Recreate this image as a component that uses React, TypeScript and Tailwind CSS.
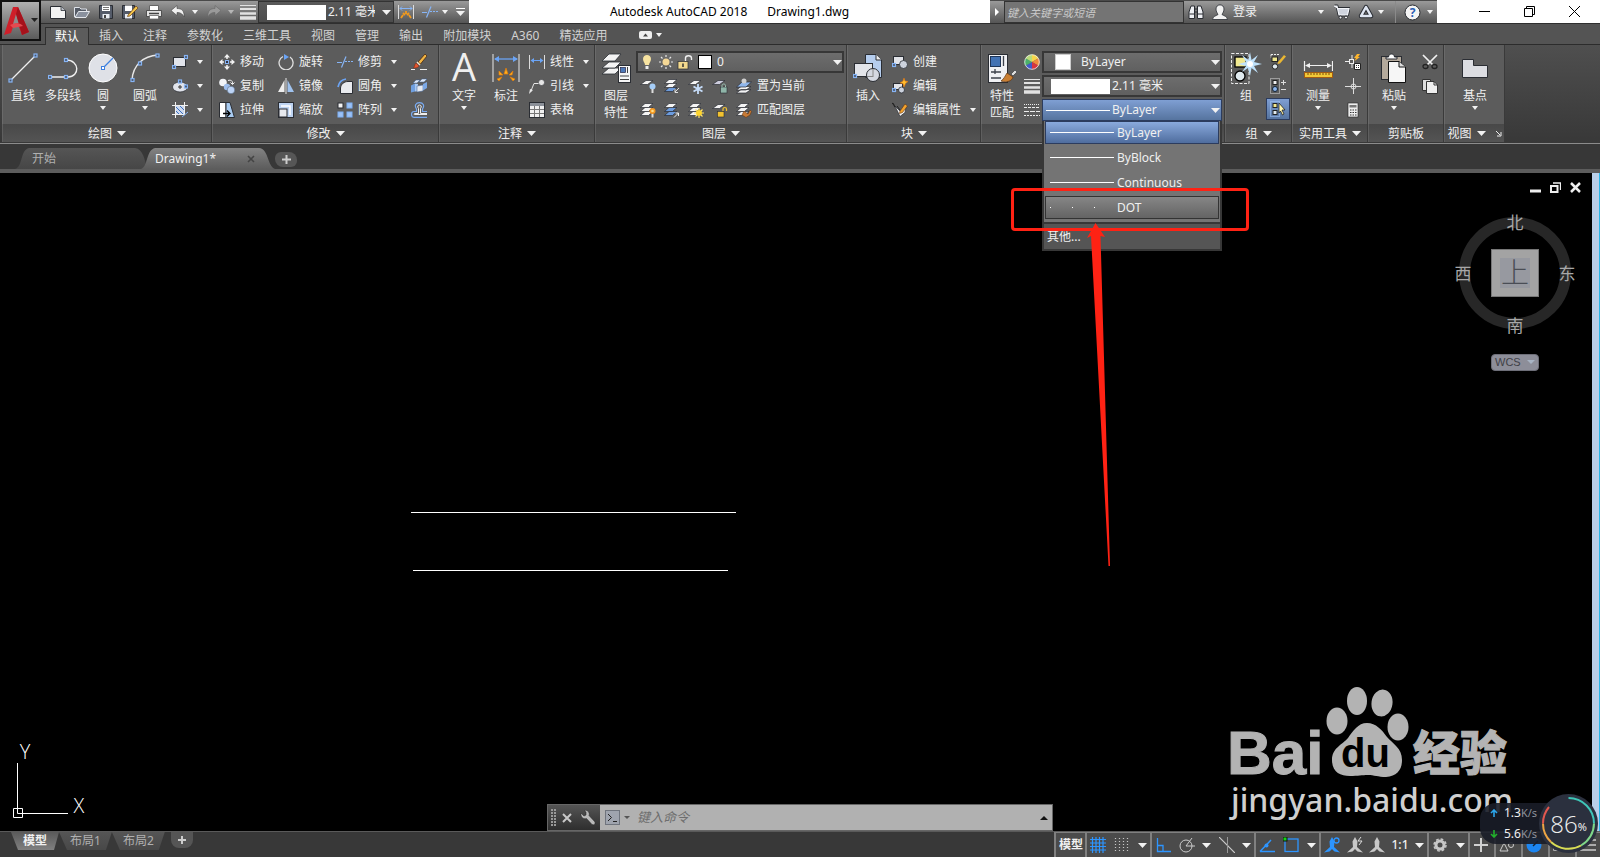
import React from 'react';

interface IconProps {
  children: React.ReactNode;
  size?: number;
}

const Icon: React.FC<IconProps> = ({ children, size = 16 }) => (
  <svg width={size} height={size} viewBox={`0 0 ${size} ${size}`} fill="none" className="shrink-0" aria-hidden="true">
    {children}
  </svg>
);

const BLUE = '#86b4f5';
const PALE = '#e4e7ec';
const DARK = '#2a2d33';

const Node: React.FC<{ x: number; y: number }> = ({ x, y }) => (
  <rect x={x - 1.5} y={y - 1.5} width="3" height="3" fill="#4a5568" stroke={BLUE} strokeWidth="1.2" />
);

const Caret: React.FC<{ big?: boolean }> = ({ big }) => (
  <svg width={big ? 9 : 6} height={big ? 5 : 4} viewBox="0 0 8 4" preserveAspectRatio="none" className="pointer-events-none shrink-0" aria-hidden="true">
    <path d="M0 0H8L4 4Z" fill="#f2f2f2" />
  </svg>
);

/* stack of sheets used by every layer icon */
const Sheets: React.FC<{ top?: string; low?: string }> = ({ top = '#f4f4f4', low = '#f4f4f4' }) => (
  <g stroke={DARK} strokeWidth="0.7">
    <path d="M0.5 13.5L5 9.500H13L8.500 13.500Z" fill={low} />
    <path d="M0.5 9.500L5 5.500H13L8.500 9.500Z" fill={top} />
    <path d="M0.5 5.500L5 1.500H13L8.500 5.500Z" fill="#f4f4f4" />
  </g>
);

const OneSheet: React.FC<{ fill?: string }> = ({ fill = '#f4f4f4' }) => (
  <path d="M0.5 6.500L6 2.500H13L7.500 6.500Z" fill={fill} stroke={DARK} strokeWidth="0.7" />
);

const icons = {
  newFile: (
    <Icon>
      <path d="M.5 2.500H11L15.500 6.500V14.500H.500Z" fill="#f3f3f3" stroke={DARK} />
      <path d="M11 2.500V6.500H15.500" fill="#b9bdc4" stroke={DARK} strokeWidth=".8" />
    </Icon>
  ),
  open: (
    <Icon>
      <path d="M.5 13V3.500H5.500L7 5H12.500V8" fill="#555b66" stroke="#dfe3ea" />
      <path d="M1 13.500L4.500 7.500H15.500L12 13.500Z" fill="#8a919e" stroke={PALE} />
    </Icon>
  ),
  save: (
    <Icon>
      <path d="M1.500 1.500H14.500V14.500H1.500Z" fill="#545b69" stroke={DARK} />
      <path d="M4 1.500H12V7H4Z" fill="#fff" />
      <path d="M5 3.500H11M5 5.500H11" stroke="#777" />
      <path d="M4.500 10H11.500V14.500H4.500Z" fill="#e9edf3" />
      <path d="M6 11H8V14H6Z" fill="#444" />
    </Icon>
  ),
  saveAs: (
    <Icon>
      <path d="M.5 1.500H12.500V14.500H.500Z" fill="#545b69" stroke={DARK} />
      <path d="M3 1.500H10V7H3Z" fill="#fff" />
      <path d="M3 10H10V14.500H3Z" fill="#e9edf3" />
      <path d="M6 11L14 2L16 4L8 12L5.500 12.500Z" fill="#f3c54c" stroke="#6b3f15" strokeWidth=".7" />
    </Icon>
  ),
  print: (
    <Icon>
      <path d="M3.500 6V1.500H12.500V6" fill="#fff" stroke="#666" />
      <path d="M.5 6.500H15.500V12.500H.500Z" fill="#e4e4e4" stroke="#3a3a3a" strokeWidth=".8" />
      <path d="M3 9.500H13" stroke="#444" strokeWidth="1.500" />
      <path d="M3.500 11.500H12.500V15H3.500Z" fill="#fff" stroke="#666" strokeWidth=".8" />
    </Icon>
  ),
  undo: (
    <Icon>
      <path d="M1 6.500L7 1.500V4.500C12 4.500 14.500 7 14 13C12.500 10 11 8.500 7 8.500V11.500Z" fill="#f0f0f0" stroke="#444" strokeWidth=".6" />
    </Icon>
  ),
  redo: (
    <Icon>
      <path d="M15 6.500L9 1.500V4.500C4 4.500 1.500 7 2 13C3.500 10 5 8.500 9 8.500V11.500Z" fill="#9a9a9a" stroke="#666" strokeWidth=".6" />
    </Icon>
  ),
  weights: (
    <Icon>
      <path d="M0 1.500H16" stroke="#e2e2e2" />
      <path d="M0 5H16" stroke="#e2e2e2" strokeWidth="2" />
      <path d="M0 9.500H16" stroke="#e2e2e2" strokeWidth="2.500" />
      <path d="M0 14H16" stroke="#e2e2e2" strokeWidth="3.500" />
    </Icon>
  ),
  lineTypes: (
    <Icon>
      <path d="M0 2.500H16" stroke="#eee" strokeDasharray="1 1" />
      <path d="M0 5.500H16" stroke="#eee" strokeDasharray="3 1" />
      <path d="M0 9.500H16" stroke="#eee" strokeDasharray="5 1" />
      <path d="M0 13.500H16" stroke="#eee" strokeDasharray="2 1" />
    </Icon>
  ),
  dimSmall: (
    <Icon>
      <path d="M.5 1V15M15.500 1V15" stroke="#ddd" />
      <path d="M2 4.500H14M4 2.500L2 4.500L4 6.500M12 2.500L14 4.500L12 6.500" stroke={BLUE} />
      <path d="M3 14L5 11M5 9L7 11M8 7V10M11 9L9 11M13 14L11 11" stroke="#f39a1c" strokeWidth="1.800" />
    </Icon>
  ),
  trim: (
    <Icon>
      <path d="M0 8.500H5" stroke={BLUE} />
      <path d="M4.500 13.500L9 2.500" stroke={BLUE} strokeWidth="1.200" />
      <path d="M8 7.500H16" stroke={BLUE} strokeDasharray="2 1" />
    </Icon>
  ),
  line: (
    <Icon size={30}>
      <path d="M2 28L28 2" stroke="#f0f0f0" strokeWidth="1.300" />
      <Node x={2.5} y={27.500} />
      <Node x={27.5} y={2.500} />
    </Icon>
  ),
  polyline: (
    <Icon size={30}>
      <path d="M2 24H20C32 24 32 7 18 7" stroke="#f0f0f0" strokeWidth="1.400" />
      <Node x={2} y={24} />
      <Node x={18} y={24} />
      <Node x={18} y={7} />
    </Icon>
  ),
  circle: (
    <Icon size={30}>
      <circle cx="15" cy="15" r="14" fill="#dfe1e7" stroke="#fff" />
      <path d="M15 15L25 5" stroke="#3c7fe0" strokeWidth="1.300" />
      <rect x="13.500" y="13.500" width="3" height="3" fill="#fff" stroke="#3c7fe0" />
    </Icon>
  ),
  arc: (
    <Icon size={30}>
      <path d="M2 27C3 12 13 3 28 2" stroke="#e8e8e8" strokeWidth="1.400" />
      <Node x={2.5} y={27} />
      <Node x={10} y={10.500} />
      <Node x={27.5} y={2.500} />
    </Icon>
  ),
  rect: (
    <Icon>
      <rect x="1.500" y="3.500" width="12" height="9" fill="#e1e4eb" stroke={DARK} />
      <Node x={2} y={13} />
      <Node x={14} y={3} />
    </Icon>
  ),
  ellipse: (
    <Icon>
      <ellipse cx="8" cy="9" rx="7.500" ry="5" fill="#e1e4eb" stroke={DARK} strokeWidth=".7" />
      <path d="M8 7V11M6 9H10" stroke="#333" />
      <Node x={8} y={3.500} />
      <Node x={14} y={8.500} />
    </Icon>
  ),
  hatch: (
    <Icon>
      <path d="M3 3H13V13H3Z" fill="#cdd9ee" />
      <path d="M3 8L8 13M3 4L12 13M7 3L13 9" stroke="#3a6fc0" />
      <path d="M3.500 0V16M12.500 0V13M0 3.500H16M0 12.500H13" stroke="#f0f0f0" />
      <path d="M10 15L16 10" stroke={BLUE} />
    </Icon>
  ),
  move: (
    <Icon>
      <path d="M8 0L11 3.500H5ZM8 16L5 12.500H11ZM0 8L3.500 5V11ZM16 8L12.500 11V5Z" fill="#f2f2f2" />
      <path d="M8 3V5M8 11V13M3 8H5M11 8H13" stroke="#f2f2f2" strokeWidth="1.500" />
      <rect x="6.500" y="6.500" width="3" height="3" fill="#334" stroke={BLUE} />
    </Icon>
  ),
  copy: (
    <Icon>
      <circle cx="4" cy="4.500" r="3.800" fill="#f1f3f7" />
      <circle cx="8" cy="9" r="3.200" fill="#9dbdec" />
      <circle cx="12" cy="12" r="3.800" fill="#bcd3f5" stroke="#456" strokeWidth=".5" />
      <path d="M9 2.500C12 1.500 14 3 13.500 6M11.500 4.500L13.500 6.500L15.500 4.500" stroke="#f2f2f2" />
    </Icon>
  ),
  stretch: (
    <Icon>
      <path d="M.5 .5H7V15.500H.500Z" fill="#fff" stroke={DARK} />
      <path d="M7 .500H11L15.500 15.500H7Z" fill="#a9cbf0" stroke={DARK} />
      <path d="M4 11.500H10M8 8.500L11 11.500L8 14.500" stroke="#000" strokeWidth="1.300" />
    </Icon>
  ),
  rotate: (
    <Icon>
      <path d="M5 2.500A7 7 0 1 0 12 3" stroke="#e0e0e0" strokeWidth="1.300" />
      <path d="M6 0L11 3L6 6Z" fill="#6ba4f5" />
    </Icon>
  ),
  mirror: (
    <Icon>
      <path d="M6.500 2V14H0Z" fill="#eee" />
      <path d="M9.500 2V14H16Z" fill="#9fc2ee" />
      <path d="M8 0V16" stroke="#e6e6e6" />
    </Icon>
  ),
  scale: (
    <Icon>
      <rect x=".5" y=".5" width="15" height="15" fill="#bdd3f1" stroke={DARK} />
      <path d="M3 4H12V13" stroke="#fff" strokeWidth="1.500" />
      <rect x="1" y="7" width="8" height="8" fill="#e7e9ee" stroke={DARK} />
    </Icon>
  ),
  fillet: (
    <Icon>
      <path d="M3.500 15.500V10C4 6 7 3.500 11 3.500H15.500V15.500Z" fill="#e8eaee" stroke={DARK} />
      <path d="M1 9C2 4 5 1.500 9 1" stroke="#6ba4f5" strokeWidth="1.700" />
    </Icon>
  ),
  array: (
    <Icon>
      <rect x="1" y="1" width="5" height="5" fill="#f2f2f2" stroke={DARK} />
      <rect x="10" y="1" width="5" height="5" fill="#9dc1f3" stroke="#7db0f5" />
      <rect x="1" y="10" width="5" height="5" fill="#9dc1f3" stroke="#7db0f5" />
      <rect x="10" y="10" width="5" height="5" fill="#9dc1f3" stroke="#7db0f5" />
    </Icon>
  ),
  erase: (
    <Icon>
      <path d="M7 8L14 0L16 2L9.500 10Z" fill="#f2b545" stroke="#3d1d08" strokeWidth=".7" />
      <path d="M6.500 7.500L9.500 10.500L8.500 11.500L5.500 8.500Z" fill="#f4ead2" />
      <path d="M5 9L8 12C7 14 4 14 2.500 14C4 12 3.500 10 5 9Z" fill="#e4572e" stroke="#7a2410" strokeWidth=".5" />
      <path d="M0 15.500H4M9 15.500H16" stroke="#eee" />
    </Icon>
  ),
  explode: (
    <Icon>
      <path d="M0 7.500L4 5.500V13.500L0 14.500Z" fill="#6f9fe0" />
      <path d="M4 5.500L7 6V13.500L4 13.500Z" fill="#a9c8f2" />
      <path d="M6 8L12 7V13L6 14Z" fill="#e6eaf2" stroke="#3b5f93" strokeWidth=".5" />
      <path d="M12 6L16 4V10L12 12.500Z" fill="#7ba8e6" />
      <path d="M2 5L5 2H9L6 5ZM8 4L11 1H16L13 4Z" fill="#dfe9f8" stroke="#3b5f93" strokeWidth=".5" />
    </Icon>
  ),
  offset: (
    <Icon>
      <path d="M16 15.300H3C-.3 15.300 -.3 9.500 3 9.500H5.500V7C3 3.500 5 .700 8.500 .700C12 .700 14 3.500 11.500 7V9.500H16" stroke="#79abf2" strokeWidth="1.200" />
      <path d="M16 12.500H3.500C2.500 12.500 3 11.500 4 11.500H7.500V6.500C6 4.500 7 3 8.500 3C10 3 11 4.500 9.500 6.500V11.500H16" stroke="#eee" />
    </Icon>
  ),
  dimension: (
    <Icon size={30}>
      <path d="M2 1V29M28 1V29" stroke="#e8e8e8" />
      <path d="M4 6H26" stroke="#6ba4f5" strokeWidth="1.300" />
      <path d="M3 6L8 3V9ZM27 6L22 3V9Z" fill="#6ba4f5" />
      <path d="M6 26L11 24L8 28ZM8 18L12 22L8 22ZM15 15L17 21H13ZM22 18L21 22L18 22ZM24 26L19 24L22 28Z" fill="#ffb01f" stroke="#e07b0c" strokeWidth=".7" />
    </Icon>
  ),
  linear: (
    <Icon>
      <path d="M.5 1V15M15.500 1V15" stroke="#ddd" />
      <path d="M3 6.500H13" stroke="#6ba4f5" />
      <path d="M1.500 6.500L5 4V9ZM14.500 6.500L11 4V9Z" fill="#6ba4f5" />
    </Icon>
  ),
  leader: (
    <Icon>
      <path d="M1.500 14L5 5.500H10" stroke="#e6e6e6" />
      <path d="M0 16L1 11L4 12Z" fill="#e6e6e6" />
      <circle cx="12.500" cy="4.500" r="3" fill="#e6e6e6" stroke={DARK} strokeWidth=".5" />
    </Icon>
  ),
  table: (
    <Icon>
      <rect x=".5" y=".5" width="15" height="15" fill="#f0f0f0" stroke={DARK} />
      <path d="M1 1H15V4H1Z" fill="#8b9098" />
      <path d="M1 7.500H15M1 11.500H15M5.500 4V15M10.500 4V15" stroke="#777" />
    </Icon>
  ),
  layerProps: (
    <Icon size={30}>
      <g stroke={DARK} strokeWidth=".8" fill="#f3f3f3">
        <path d="M1 21L8 15H20L14 21Z" />
        <path d="M1 15L8 9H20L14 15Z" />
        <path d="M1 8L8 1H20L14 8Z" />
      </g>
      <rect x="17.500" y="12.500" width="12" height="17" fill="#f6f6f6" stroke={DARK} />
      <rect x="19.500" y="14.500" width="5" height="5" fill="#4d79b8" stroke="#224" strokeWidth=".7" />
      <path d="M26.500 14V20M19 23H28M19 26.500H28" stroke="#444" />
    </Icon>
  ),
  bulb: (
    <Icon>
      <path d="M4 5C4 -.5 12 -.5 12 5C12 8 10 8.500 10 11H6C6 8.500 4 8 4 5Z" fill="#f7e3a0" />
      <path d="M6.500 12H9.500V15H6.500Z" fill="#eee" />
    </Icon>
  ),
  sun: (
    <Icon>
      <circle cx="8" cy="8" r="3.500" fill="#f5d896" />
      <path d="M8 1V3M8 13V15M1 8H3M13 8H15M3 3L4.500 4.500M11.500 11.500L13 13M13 3L11.500 4.500M4.500 11.500L3 13" stroke="#e8e8e8" strokeWidth="1.200" />
    </Icon>
  ),
  unlock: (
    <Icon>
      <rect x="1" y="7.500" width="10" height="7.500" fill="#f3d98d" stroke={DARK} strokeWidth=".7" />
      <path d="M8.500 7V4C8.500 1 14.500 1 14.500 4V6" stroke="#f0f0f0" strokeWidth="1.400" />
      <path d="M6 9.500V13" stroke="#333" strokeWidth="1.500" />
    </Icon>
  ),
  layerOff: (
    <Icon>
      <OneSheet />
      <circle cx="12.500" cy="8.500" r="3" fill="#a5cdf7" />
      <path d="M12.500 11V15" stroke="#ddd" strokeWidth="2" />
    </Icon>
  ),
  layerIso: (
    <Icon>
      <Sheets top="#f4f4f4" low="#6c9bdc" />
      <path d="M15 10L11 14M11 11V14.500H14" stroke="#ddd" />
    </Icon>
  ),
  layerFreeze: (
    <Icon>
      <OneSheet />
      <path d="M10 6V16M5.500 8.500L14.500 13.500M5.500 13.500L14.500 8.500" stroke="#c6ddfa" strokeWidth="1.800" />
    </Icon>
  ),
  layerLock: (
    <Icon>
      <OneSheet fill="#ccd" />
      <rect x="8.500" y="9" width="6.500" height="6" fill="#8fb5a8" stroke={DARK} strokeWidth=".6" />
      <path d="M10 9V7.500C10 5.500 13.500 5.500 13.500 7.500V9" stroke="#9ec4b6" />
    </Icon>
  ),
  layerCurrent: (
    <Icon>
      <path d="M.5 15L5 11.500H15L10 15ZM.500 12L5 8.500H15L10 12Z" fill="#f4f4f4" stroke={DARK} strokeWidth=".7" />
      <path d="M.5 9L6 4H15.500L10 9Z" fill="#8fb6ec" stroke={DARK} strokeWidth=".7" />
      <circle cx="8" cy="3" r="2.500" fill="#d0d0d0" />
    </Icon>
  ),
  layerOn: (
    <Icon>
      <Sheets />
      <circle cx="12.500" cy="9" r="3" fill="#f59a23" />
      <circle cx="12.500" cy="9" r="1.300" fill="#ffe08a" />
      <path d="M12.500 12V15.500" stroke="#ddd" strokeWidth="2" />
    </Icon>
  ),
  layerUniso: (
    <Icon>
      <Sheets top="#6c9bdc" low="#6c9bdc" />
      <path d="M10 15.500L14.500 11M11.500 11H14.500V14" stroke="#eee" />
    </Icon>
  ),
  layerThaw: (
    <Icon>
      <Sheets />
      <circle cx="11" cy="11" r="3" fill="#ffd52e" />
      <path d="M11 6V8M11 14V16M6 11H8M14 11H16M7.500 7.500L9 9M14.500 7.500L13 9M7.500 14.500L9 13M14.500 14.500L13 13" stroke="#ffe36b" strokeWidth="1.200" />
    </Icon>
  ),
  layerUnlock: (
    <Icon>
      <OneSheet />
      <rect x="5.500" y="9.500" width="6.500" height="5.500" fill="#f2c230" stroke={DARK} strokeWidth=".6" />
      <path d="M11 9V7C11 5 14.500 5 14.500 7V9" stroke="#f2c230" strokeWidth="1.200" />
    </Icon>
  ),
  layerMatch: (
    <Icon>
      <Sheets />
      <path d="M8 9L12 12L14 8L15.500 9.500L14 13L10 15.500L6 13Z" fill="#c87a35" stroke="#5c3210" strokeWidth=".5" />
    </Icon>
  ),
  insert: (
    <Icon size={30}>
      <path d="M12.500 1.500H23L28.500 7V24.500H12.500Z" fill="#b5cdee" stroke={DARK} />
      <path d="M23 1.500V7H28.500" fill="#eee" stroke={DARK} />
      <rect x="1.500" y="10.500" width="18" height="13" fill="#e2e4e9" stroke={DARK} />
      <circle cx="20" cy="22" r="6.500" fill="#d5d9e2" stroke={DARK} />
      <path d="M20 24V16M14 23.500H20" stroke="#888" />
      <Node x={2} y={23} />
    </Icon>
  ),
  block: (
    <Icon>
      <rect x="1.500" y="2.500" width="10" height="8" fill="#e2e4e9" stroke={DARK} />
      <circle cx="11.500" cy="10.500" r="4" fill="#ccd2dd" stroke={DARK} strokeWidth=".8" />
      <Node x={2} y={11} />
    </Icon>
  ),
  blockEdit: (
    <Icon>
      <rect x="1.500" y="5.500" width="9" height="6" fill="#e2e4e9" stroke={DARK} />
      <circle cx="9.500" cy="12" r="3" fill="#ccd2dd" stroke={DARK} strokeWidth=".8" />
      <path d="M12 0L13 3L16 3.500L13.500 5.500L12 9L11 5.500L8 5L11 3Z" fill="#ffbd2e" stroke="#e3750f" strokeWidth=".6" />
      <Node x={2} y={12} />
    </Icon>
  ),
  attrEdit: (
    <Icon>
      <path d="M3 4L8 14.500L13 10.500L14 5L8 9Z" fill="#f4f4f4" stroke={DARK} strokeWidth=".7" />
      <path d="M0 1.500C2 1 2 4 3 5" stroke="#222" strokeWidth="1.200" />
      <path d="M8 9L13 2L15.500 4L10.500 10.500L7.500 11.500Z" fill="#f2a22e" stroke="#5c3210" strokeWidth=".6" />
      <path d="M5 4L8 8" stroke="#222" />
    </Icon>
  ),
  matchProps: (
    <Icon size={30}>
      <rect x="1.500" y="1.500" width="19" height="28" fill="#f0f1f4" stroke={DARK} />
      <rect x="3.500" y="3.500" width="10" height="10" fill="#4272b3" stroke="#1f3557" />
      <path d="M16.500 3V13M4 19H14M4 25H14M8 16V21" stroke="#3c414b" strokeWidth="1.300" />
      <path d="M28 17L30 19L26 23L24 21Z" fill="#ddd" stroke={DARK} strokeWidth=".6" />
      <path d="M20 20L26 24C25 28 20 30 14 28C17 26 18 23 20 20Z" fill="#c97f33" stroke="#5c3210" strokeWidth=".7" />
    </Icon>
  ),
  wheel: (
    <Icon>
      <path d="M8 8V.500A7.500 7.500 0 0 1 14.500 4.200Z" fill="#f7d64a" />
      <path d="M8 8L14.500 4.200A7.500 7.500 0 0 1 14.500 11.800Z" fill="#f08a3c" />
      <path d="M8 8L14.500 11.800A7.500 7.500 0 0 1 8 15.500Z" fill="#d7353f" />
      <path d="M8 8V15.500A7.500 7.500 0 0 1 1.500 11.800Z" fill="#4259c9" />
      <path d="M8 8L1.500 11.800A7.500 7.500 0 0 1 1.500 4.200Z" fill="#4bb06a" />
      <path d="M8 8L1.500 4.200A7.500 7.500 0 0 1 8 .5Z" fill="#b9dc7a" />
      <circle cx="8" cy="8" r="7.300" stroke="#eee" strokeWidth=".8" />
    </Icon>
  ),
  group: (
    <Icon size={32}>
      <path d="M1.500 1.500H19V31.500H1.500Z" stroke="#eee" strokeDasharray="3 1.500" />
      <rect x="5" y="5" width="11" height="10" fill="#f1e98f" stroke="#000" strokeWidth="1.300" />
      <circle cx="10" cy="24" r="5" fill="#dfe9ee" stroke="#000" strokeWidth="1.300" />
      <path d="M20 0L21.500 8L28 3L24 10L32 12L24 14L28 21L21.500 16L20 24L18 16L12 20L16 14L8 12L16 10L12 3L18.500 8Z" fill="#bfe2fb" />
      <circle cx="20" cy="12" r="3" fill="#fff" />
    </Icon>
  ),
  ungroup: (
    <Icon>
      <path d="M1 .500H9M1 .500V4" stroke="#eee" strokeDasharray="2 1" />
      <rect x="2" y="3" width="5.500" height="4.500" fill="#f1e98f" stroke="#222" />
      <circle cx="5" cy="12.500" r="2.700" fill="#dfe9ee" stroke="#222" />
      <path d="M8 8L14 1L16 2.500L10 9.500L7.500 10Z" fill="#eab733" />
    </Icon>
  ),
  groupEdit: (
    <Icon>
      <path d="M.5 .500H9.500V15.500H.500Z" stroke="#ddd" strokeDasharray="1 1" />
      <rect x="3" y="2.500" width="4" height="4" fill="#eee" stroke="#222" />
      <circle cx="5" cy="11" r="2.500" fill="#8db5ec" stroke="#123" />
      <path d="M11 4.500H16M13.500 2V7M11 11.500H16" stroke="#ddd" />
    </Icon>
  ),
  groupSelect: (
    <Icon>
      <path d="M.5 .500H9.500V15.500H.500Z" stroke="#a9cdff" strokeDasharray="1 1" />
      <rect x="3" y="2.500" width="4" height="4" fill="#f1e98f" stroke="#222" />
      <rect x="3" y="9.500" width="4" height="4" fill="#dfe9ee" stroke="#222" />
      <path d="M9 2L15 9H12L14 13L12.500 14L10.500 10L9 12Z" fill="#fff6b0" stroke="#111" strokeWidth=".7" />
    </Icon>
  ),
  measure: (
    <Icon size={30}>
      <path d="M1.500 8V18M29.500 8V18M3 12.500H28" stroke="#f0f0f0" strokeWidth="1.200" />
      <path d="M2 12.500L7 10V15ZM29 12.500L24 10V15Z" fill="#f0f0f0" />
      <rect x="1.500" y="19.500" width="28" height="5" fill="#f2c838" stroke="#a35b12" />
      <path d="M5 20V22M8 20V22M11 20V22M14 20V22M17 20V22M20 20V22M23 20V22M26 20V22" stroke="#7b4d0b" />
    </Icon>
  ),
  quickSelect: (
    <Icon>
      <path d="M7 1V5M0 7.500H4M7 10V14" stroke="#eee" />
      <rect x="4.500" y="5.500" width="4" height="4" stroke="#eee" />
      <path d="M12 0L9 4H11L9.500 7L15 3H13L15 0Z" fill="#ffb52b" />
      <path d="M9.500 9.500H15.500V15.500H9.500Z" fill="#fff" stroke="#222" />
      <path d="M11 11.500H14M11 13.500H14" stroke="#333" strokeDasharray="1 1" />
    </Icon>
  ),
  point: (
    <Icon>
      <path d="M8.500 0V16M0 8.500H16" stroke="#ddd" />
      <circle cx="8.500" cy="8.500" r="2.500" stroke="#ddd" />
    </Icon>
  ),
  calc: (
    <Icon>
      <rect x="3" y="1" width="10" height="14" fill="#eee" stroke="#222" strokeWidth=".6" />
      <path d="M4.500 3H11.500V5.500H4.500Z" fill="#777" />
      <path d="M5 8H12M5 10.500H12M5 13H12" stroke="#333" strokeWidth="1.200" strokeDasharray="1.500 1" />
    </Icon>
  ),
  paste: (
    <Icon size={30}>
      <rect x="2.500" y="3.500" width="20" height="23" fill="#b5aa9c" stroke={DARK} />
      <path d="M7 4H9.500C9.500 0 15.500 0 15.500 4H18V6H7Z" fill="#fff" stroke={DARK} />
      <path d="M9.500 8.500H20L26.500 14V29.500H9.500Z" fill="#f6f6f6" stroke="#111" />
      <path d="M20 8.500V14H26.500" fill="#ddd" stroke="#111" />
    </Icon>
  ),
  cut: (
    <Icon>
      <path d="M1 1L11 11M15 1L5 11" stroke="#f2f2f2" strokeWidth="1.700" />
      <ellipse cx="3.500" cy="12.500" rx="2.500" ry="2" stroke="#222" strokeWidth="1.300" />
      <ellipse cx="12.500" cy="12.500" rx="2.500" ry="2" stroke="#222" strokeWidth="1.300" />
    </Icon>
  ),
  copyClip: (
    <Icon>
      <path d="M.5 1.500H8.500V12.500H.500Z" fill="#ddd" stroke="#333" />
      <path d="M4.500 3.500H12L15.500 7V15.500H4.500Z" fill="#eee" stroke="#333" />
      <path d="M12 3.500V7H15.500" stroke="#333" />
    </Icon>
  ),
  base: (
    <Icon size={30}>
      <path d="M2.500 6.500H13.500V12.500H27.500V24.500H2.500Z" fill="#dcdde2" stroke={DARK} />
    </Icon>
  ),
};

interface ToolProps {
  icon?: React.ReactNode;
  label?: string;
  arrow?: boolean;
}

const BigTool: React.FC<ToolProps & { second?: string; width?: string }> = ({ icon, label, second, arrow, width = 'w-10' }) => (
  <button className={`flex flex-col items-center shrink-0 ${width}`}>
    <span className="flex h-9 items-center justify-center">{icon}</span>
    <span className="mt-px leading-[17px] whitespace-nowrap">{label}</span>
    {second && <span className="leading-[17px]">{second}</span>}
    {arrow && <span className="pt-0.5 leading-[0]"><Caret /></span>}
  </button>
);

const SmallTool: React.FC<ToolProps> = ({ icon, label, arrow }) => (
  <button className="flex h-6 items-center gap-[5px] whitespace-nowrap">
    {icon}
    {label && <span>{label}</span>}
    {arrow && <span className="ml-1 flex"><Caret /></span>}
  </button>
);

interface PanelProps {
  title?: string;
  width: string;
  arrow?: boolean;
  launcher?: boolean;
  children: React.ReactNode;
}

const Panel: React.FC<PanelProps> = ({ title, width, arrow, launcher, children }) => (
  <section className={`flex shrink-0 flex-col border-r border-[#3a3a3a] ${width}`}>
    <div className="flex h-[79px] bg-[#5c5c5c] border-l border-[#6a6a6a] pt-[5px]">{children}</div>
    <h2 className="flex h-[18px] items-center justify-center gap-[5px] border-l border-[#5f5f5f] bg-linear-to-b from-[#484848] to-[#545454] pt-px">
      {title}
      {arrow && <Caret big />}
      {launcher && (
        <svg width="7" height="7" viewBox="0 0 7 7" className="ml-1" aria-hidden="true">
          <path d="M1 1L5 5M6 2V6H2" stroke="#eee" fill="none" />
        </svg>
      )}
    </h2>
  </section>
);

const combo = 'flex h-[22px] items-center border-2 border-[#373737] bg-linear-to-b from-[#6d6d6d] to-[#606060]';

const tabs = ['默认', '插入', '注释', '参数化', '三维工具', '视图', '管理', '输出', '附加模块', 'A360', '精选应用'];

const TitleBar: React.FC = () => (
  <div className="flex h-6 border-b border-[#2f2f2f] bg-white">
    <div className="flex items-center gap-2 border-t border-[#4a4a4a] bg-linear-to-b from-[#9a9a9a] to-[#555555] pl-[9px] pr-1">
      {[icons.newFile, icons.open, icons.save, icons.saveAs, icons.print].map((icon, index) => (
        <button key={index}>{icon}</button>
      ))}
      <button className="flex items-center gap-1.5">{icons.undo}<Caret /></button>
      <button className="flex items-center gap-1.5">{icons.redo}<span className="opacity-50 flex"><Caret /></span></button>
      <div className="-ml-0.5 flex items-center gap-0.5">
        {icons.weights}
        <div className="flex h-[22px] w-[136px] items-center border border-[#333333] bg-linear-to-b from-[#5a5a5a] to-[#4c4c4c] pl-2">
          <span className="h-[15px] w-[59px] bg-white shrink-0" />
          <select aria-label="线宽" className="ml-0.5 w-[47px] appearance-none overflow-hidden">
            <option>2.11 毫米</option>
          </select>
          <span className="ml-auto mr-0.5 flex"><Caret big /></span>
        </div>
      </div>
      <button className="-ml-1">{icons.dimSmall}</button>
      <button className="flex items-center gap-1">{icons.trim}<Caret /></button>
      <button className="flex flex-col items-center gap-[2px]" aria-label="自定义">
        <span className="h-px w-[9px] bg-white" />
        <Caret big />
      </button>
    </div>
    <h1 className="flex flex-1 items-center justify-center gap-5 text-black">
      <span>Autodesk AutoCAD 2018</span>
      <span>Drawing1.dwg</span>
    </h1>
    <div className="flex w-[447px] items-center border-t border-[#4a4a4a] bg-linear-to-b from-[#9a9a9a] to-[#555555]">
      <button className="flex w-[14px] justify-center" aria-label="展开">
        <svg width="4" height="8" aria-hidden="true"><path d="M0 0L4 4L0 8Z" fill="#fff" /></svg>
      </button>
      <input
        aria-label="搜索"
        placeholder="键入关键字或短语"
        className="h-[22px] w-[180px] border border-[#333333] bg-[#747474] px-0.5 text-[11px] italic placeholder:text-[#c9c9c9]"
      />
      <button className="ml-1 mr-2">
        <Icon>
          <path d="M3 2H6.500V14.500H1V8ZM9.500 2H13L15 8V14.500H9.500Z" fill="#eef0f4" stroke={DARK} />
          <path d="M6.500 5H9.500V8H6.500M1.500 10H6.500M9.500 10H15" stroke={DARK} />
        </Icon>
      </button>
      <button className="flex items-center gap-[5px]">
        <Icon>
          <path d="M4 5C4 -.500 12 -.500 12 5C12 8 10.500 9 10 10.500C12 12 15 12 15.500 15.500H.500C1 12 4 12 6 10.500C5.500 9 4 8 4 5Z" fill="#f2f2f2" stroke={DARK} strokeWidth=".8" />
        </Icon>
        登录
      </button>
      <span className="ml-auto mr-2.5 flex"><Caret /></span>
      <button className="mr-2">
        <Icon>
          <path d="M.5 2H3L5 11H13.500L15 4.500H4" stroke={DARK} strokeWidth="3" strokeLinejoin="round" />
          <path d="M.5 2H3L5 11H13.500L15 4.500H4Z" fill="#cfd4de" stroke="#f2f4f8" strokeWidth="1.200" />
          <circle cx="6.500" cy="13.500" r="1.500" fill="#eee" stroke={DARK} />
          <circle cx="12" cy="13.500" r="1.500" fill="#eee" stroke={DARK} />
        </Icon>
      </button>
      <button className="flex items-center gap-1 pr-[11px]">
        <Icon>
          <path d="M8 3L13 12H3Z" stroke={DARK} strokeWidth="4.500" strokeLinejoin="round" />
          <path d="M8 3L13 12H3Z" stroke="#dfe6f2" strokeWidth="2.500" strokeLinejoin="round" />
        </Icon>
        <Caret />
      </button>
      <button className="flex h-full items-center gap-1.5 border-l border-[#8a8a8a] pl-2 pr-1">
        <svg width="17" height="17" viewBox="0 0 17 17" aria-hidden="true">
          <circle cx="8.500" cy="8.500" r="7.500" fill="#f4f4f4" stroke={DARK} />
          <text x="8.500" y="13" textAnchor="middle" fontSize="12" fontWeight="700" fill="#2c5fb5">?</text>
        </svg>
        <Caret />
      </button>
    </div>
    <div className="flex w-[163px] items-center justify-end gap-[34px] pr-5">
      <button aria-label="最小化"><svg width="11" height="11"><path d="M0 5.500H11" stroke="#000" /></svg></button>
      <button aria-label="还原">
        <svg width="11" height="11" fill="none" stroke="#000"><path d="M.5 2.500H8.500V10.500H.500ZM2.500 2.500V.500H10.500V8.500H8.500" /></svg>
      </button>
      <button aria-label="关闭"><svg width="11" height="11"><path d="M0 0L11 11M11 0L0 11" stroke="#000" /></svg></button>
    </div>
  </div>
);

const LineSample: React.FC<{ dotted?: boolean }> = ({ dotted }) => (
  <svg width="64" height="1" className="shrink-0" aria-hidden="true">
    <path d="M0 .5H64" stroke="#fff" strokeDasharray={dotted ? '1 21' : undefined} />
  </svg>
);

const LinetypeList: React.FC = () => (
  <div className="absolute left-0 top-full z-10 w-[180px] border-2 border-t-0 border-[#373737] bg-[#747474]">
    <ul className="flex flex-col gap-[2px] px-px pb-[3px]">
      {['ByLayer', 'ByBlock', 'Continuous', 'DOT'].map((name, index) => (
        <li key={name}>
          <button
            className={`flex h-[23px] w-full items-center gap-[3px] border pl-1 ${
              index === 0
                ? 'border-[#2c3c5e] bg-linear-to-b from-[#8aaadd] to-[#4f6d9e]'
                : index === 3
                  ? 'border-[#333333] bg-linear-to-b from-[#868686] to-[#646464]'
                  : 'border-transparent'
            }`}
          >
            <LineSample dotted={index === 3} />
            {name}
          </button>
        </li>
      ))}
    </ul>
    <button className="flex h-[27px] w-full items-center border-t-2 border-[#373737] bg-[#555555] pl-[3px]">其他...</button>
  </div>
);

const Ribbon: React.FC = () => (
  <div className="flex border-b border-[#8b8b8b] bg-linear-to-b from-[#4f4f4f] to-[#383838] pb-px pl-0.5">
    <Panel title="绘图" width="w-[210px]" arrow>
      <BigTool icon={icons.line} label="直线" />
      <BigTool icon={icons.polyline} label="多段线" />
      <BigTool icon={icons.circle} label="圆" arrow />
      <BigTool icon={icons.arc} label="圆弧" arrow width="w-11" />
      <div className="flex flex-col pl-[5px]">
        <SmallTool icon={icons.rect} arrow />
        <SmallTool icon={icons.ellipse} arrow />
        <SmallTool icon={icons.hatch} arrow />
      </div>
    </Panel>
    <Panel title="修改" width="w-[227px]" arrow>
      <div className="flex gap-3.5 pl-1.5">
        <div>
          <SmallTool icon={icons.move} label="移动" />
          <SmallTool icon={icons.copy} label="复制" />
          <SmallTool icon={icons.stretch} label="拉伸" />
        </div>
        <div>
          <SmallTool icon={icons.rotate} label="旋转" />
          <SmallTool icon={icons.mirror} label="镜像" />
          <SmallTool icon={icons.scale} label="缩放" />
        </div>
        <div>
          <SmallTool icon={icons.trim} label="修剪" arrow />
          <SmallTool icon={icons.fillet} label="圆角" arrow />
          <SmallTool icon={icons.array} label="阵列" arrow />
        </div>
        <div>
          <SmallTool icon={icons.erase} />
          <SmallTool icon={icons.explode} />
          <SmallTool icon={icons.offset} />
        </div>
      </div>
    </Panel>
    <Panel title="注释" width="w-[156px]" arrow>
      <BigTool
        icon={
          <svg width="30" height="30" viewBox="0 0 30 30" aria-hidden="true">
            <text x="15" y="28" textAnchor="middle" fontFamily="Open Sans" fontSize="38" fill="#efefef">A</text>
          </svg>
        }
        label="文字"
        arrow
        width="w-12"
      />
      <BigTool icon={icons.dimension} label="标注" width="w-9" />
      <div className="pl-[5px]">
        <SmallTool icon={icons.linear} label="线性" arrow />
        <SmallTool icon={icons.leader} label="引线" arrow />
        <SmallTool icon={icons.table} label="表格" />
      </div>
    </Panel>
    <Panel title="图层" width="w-[252px]" arrow>
      <BigTool icon={icons.layerProps} label="图层" second="特性" />
      <div className="flex-1 pr-0.5">
        <div className="flex h-6 items-center">
          <div className={`${combo} w-full gap-[3px] pl-px`}>
            {icons.bulb}
            {icons.sun}
            {icons.unlock}
            <span className="ml-0.5 h-[14px] w-[14px] border border-black bg-white" />
            <select aria-label="图层" className="ml-0.5 flex-1 appearance-none">
              <option>0</option>
            </select>
            <span className="flex"><Caret big /></span>
          </div>
        </div>
        <div className="flex h-6 items-center gap-2 pl-1">
          {icons.layerOff}
          {icons.layerIso}
          {icons.layerFreeze}
          {icons.layerLock}
          <SmallTool icon={icons.layerCurrent} label="置为当前" />
        </div>
        <div className="flex h-6 items-center gap-2 pl-1">
          {icons.layerOn}
          {icons.layerUniso}
          {icons.layerThaw}
          {icons.layerUnlock}
          <SmallTool icon={icons.layerMatch} label="匹配图层" />
        </div>
      </div>
    </Panel>
    <Panel title="块" width="w-[134px]" arrow>
      <BigTool icon={icons.insert} label="插入" />
      <div className="pl-1">
        <SmallTool icon={icons.block} label="创建" />
        <SmallTool icon={icons.blockEdit} label="编辑" />
        <SmallTool icon={icons.attrEdit} label="编辑属性" arrow />
      </div>
    </Panel>
    <Panel width="w-[244px]">
      <BigTool icon={icons.matchProps} label="特性" second="匹配" />
      <div className="flex flex-col pl-0.5">
        <SmallTool icon={icons.wheel} />
        <SmallTool icon={icons.weights} />
        <SmallTool icon={icons.lineTypes} />
      </div>
      <div className="flex w-[182px] flex-col gap-0.5 pl-0.5 pt-px">
        <div className={`${combo} pl-[11px]`}>
          <span className="h-4 w-4 border border-[#cccccc] bg-white" />
          <select aria-label="颜色" className="ml-2.5 flex-1 appearance-none">
            <option>ByLayer</option>
          </select>
          <span className="flex"><Caret big /></span>
        </div>
        <div className={`${combo} pl-[7px]`}>
          <span className="h-[15px] w-[59px] bg-white" />
          <select aria-label="线宽" className="ml-0.5 flex-1 appearance-none">
            <option>2.11 毫米</option>
          </select>
          <span className="flex"><Caret big /></span>
        </div>
        <div className="relative">
          <div className="flex h-[22px] items-center border border-[#2c3c5e] bg-linear-to-b from-[#7f9fd3] to-[#56749f] pl-[3px]">
            <LineSample />
            <select aria-label="线型" className="ml-0.5 flex-1 appearance-none">
              <option>ByLayer</option>
            </select>
            <span className="mr-px flex"><Caret big /></span>
          </div>
          <LinetypeList />
        </div>
      </div>
    </Panel>
    <Panel title="组" width="w-[67px]" arrow>
      <BigTool icon={icons.group} label="组" />
      <div className="flex flex-col items-center">
        <SmallTool icon={icons.ungroup} />
        <SmallTool icon={icons.groupEdit} />
        <button className="flex h-[22px] w-6 items-center justify-center border border-[#2c3c5e] bg-linear-to-b from-[#7f9fd3] to-[#56749f]">
          {icons.groupSelect}
        </button>
      </div>
    </Panel>
    <Panel title="实用工具" width="w-[76px]" arrow>
      <BigTool icon={icons.measure} label="测量" arrow width="w-[50px]" />
      <div className="pl-0.5">
        <SmallTool icon={icons.quickSelect} />
        <SmallTool icon={icons.point} />
        <SmallTool icon={icons.calc} />
      </div>
    </Panel>
    <Panel title="剪贴板" width="w-[76px]">
      <BigTool icon={icons.paste} label="粘贴" arrow width="w-[50px]" />
      <div className="pl-[3px]">
        <SmallTool icon={icons.cut} />
        <SmallTool icon={icons.copyClip} />
      </div>
    </Panel>
    <Panel title="视图" width="w-[61px]" arrow launcher>
      <BigTool icon={icons.base} label="基点" arrow width="w-[60px]" />
    </Panel>
  </div>
);

const FileTabs: React.FC = () => (
  <nav className="flex h-[29px] items-end border-b-4 border-[#5c5c5c] bg-[#373737] pl-[15px]">
    <button className="flex h-[21px] w-[132px] items-center bg-linear-to-b from-[#555555] to-[#464646] pl-[17px] text-[#b0b0b0] [clip-path:path('M0_21C8_19_5_2_14_0H120C128_1_130_12_132_21Z')]">
      开始
    </button>
    <div className="-ml-1.5 flex h-[21px] w-[134px] items-center justify-between bg-linear-to-b from-[#838383] to-[#5c5c5c] pl-3.5 pr-5 [clip-path:path('M0_21C7_19_5_2_14_0H118C128_1_126_18_134_21Z')]">
      <button>Drawing1*</button>
      <button aria-label="关闭"><svg width="8" height="8"><path d="M1 1L7 7M7 1L1 7" stroke="#444" strokeWidth="1.600" /></svg></button>
    </div>
    <button aria-label="新建" className="mb-0.5 flex h-[15px] w-[22px] items-center justify-center rounded-tl-md rounded-tr-lg rounded-br-md rounded-bl-lg bg-[#565656]">
      <svg width="9" height="9"><path d="M4.500 0V9M0 4.500H9" stroke="#ccc" strokeWidth="2" /></svg>
    </button>
  </nav>
);

const Watermark: React.FC = () => (
  <div className="absolute bottom-0 right-[62px]" aria-hidden="true">
    <svg width="310" height="160" viewBox="1220 671 310 160" fill="#b3b3b3">
      <text x="1227" y="774" fontFamily="Liberation Sans" fontWeight="700" fontSize="62" stroke="#b3b3b3" strokeWidth="1">Bai</text>
      <ellipse cx="1337" cy="721" rx="10.500" ry="13.500" />
      <ellipse cx="1357" cy="701" rx="10" ry="14" />
      <ellipse cx="1382" cy="703" rx="10.500" ry="13.500" transform="rotate(8 1382 703)" />
      <ellipse cx="1398" cy="727" rx="10.500" ry="13.500" />
      <path d="M1367 723C1358 723 1353 731 1348 738C1342 745 1332 748 1332 760C1332 772 1340 776 1350 776C1358 776 1362 775 1368 775C1374 775 1378 777 1386 777C1397 776 1402 770 1402 760C1402 748 1393 744 1387 737C1382 730 1376 723 1367 723Z" />
      <text x="1341" y="767" fontFamily="Liberation Sans" fontWeight="700" fontSize="40" fill="#000">du</text>
      <text x="1413" y="770" fontFamily="Noto Sans CJK SC" fontWeight="900" fontSize="47" stroke="#b3b3b3" strokeWidth="1">经验</text>
      <text x="1231" y="812" fontFamily="Noto Sans" fontWeight="500" fontSize="32" fill="#cfcfcf">jingyan.baidu.com</text>
    </svg>
  </div>
);

const Drawing: React.FC = () => (
  <div className="relative flex-1 overflow-hidden bg-black">
    <span className="absolute left-[411px] top-[339px] h-px w-[325px] bg-white" />
    <span className="absolute left-[413px] top-[397px] h-px w-[315px] bg-white" />

    <div className="absolute right-[11px] top-[9px] flex gap-[9px]">
      <button aria-label="最小化"><svg width="11" height="11"><path d="M0 9H11" stroke="#eee" strokeWidth="3" /></svg></button>
      <button aria-label="还原">
        <svg width="11" height="11" fill="none" stroke="#eee"><path d="M1 4H7.500V10H1Z" strokeWidth="2" /><path d="M3 1H10.500V8" strokeWidth="1.300" /></svg>
      </button>
      <button aria-label="关闭"><svg width="11" height="11"><path d="M1 1L10 10M10 1L1 10" stroke="#eee" strokeWidth="2.500" /></svg></button>
    </div>

    <svg className="absolute right-3 top-8 font-['Noto_Sans_CJK_SC']" width="130" height="136" viewBox="0 0 130 136" fill="#a8a8a8" fontSize="17" textAnchor="middle">
      <circle cx="65" cy="68" r="50.500" fill="none" stroke="#272727" strokeWidth="11" />
      <text x="65" y="24">北</text>
      <text x="65" y="127">南</text>
      <text x="13" y="75">西</text>
      <text x="117" y="75">东</text>
      <rect x="41.500" y="44.500" width="47" height="47" fill="#a3a3a3" stroke="#777" />
      <rect x="50" y="53" width="30" height="30" fill="#9799a0" />
      <text x="65" y="78" fontSize="28" fontWeight="300" fill="#4a4d55">上</text>
    </svg>
    <button className="absolute right-[53px] top-[181px] flex h-[17px] w-12 items-center justify-between rounded border border-[#6d6e78] bg-[#8d8e99] px-[3px] font-['Liberation_Sans'] text-[11px] text-[#404046]">
      WCS
      <svg width="8" height="5"><path d="M0 0H8L4 4Z" fill="#a8b4c4" /></svg>
    </button>

    <svg className="absolute bottom-0 left-0 font-['Open_Sans']" width="100" height="90" viewBox="0 0 100 90" fill="none" stroke="#fff">
      <path d="M17.500 22V72.500H68M13.500 67.500H22.500V76.500H13.500Z" />
      <g fill="#fff" stroke="none" fontSize="20" fontWeight="300" textAnchor="middle">
        <text x="25" y="18">Y</text>
        <text x="79" y="72">X</text>
      </g>
    </svg>

    <Watermark />

    <form className="absolute bottom-0 left-[547px] flex h-[27px] w-[506px] items-center border border-[#666666] bg-linear-to-b from-[#555555] to-[#2e2e2e]">
      <svg width="5" height="18" className="ml-[3px]" aria-hidden="true">
        <path d="M1 0V18M4 0V18" stroke="#999" strokeWidth="2" strokeDasharray="2 1" />
      </svg>
      <button type="button" className="ml-1.5" aria-label="关闭"><svg width="10" height="10"><path d="M1 1L9 9M9 1L1 9" stroke="#c8c8c8" strokeWidth="2" /></svg></button>
      <button type="button" className="ml-2" aria-label="自定义">
        <Icon>
          <path d="M1 3L4 6L6 5L6 2L4 .500C8 -.500 10 3 9 5.500L15 12C15.500 14 14 15.500 12 14.500L6.500 8.500C3 9.500 .5 7 1 3Z" fill="#b8b8b8" stroke="#222" strokeWidth=".5" />
        </Icon>
      </button>
      <label htmlFor="command" className="ml-1 flex h-full items-center gap-1 bg-[#b1b1b1] pl-[5px]">
        <svg width="15" height="15" aria-hidden="true">
          <rect x=".5" y=".5" width="14" height="14" fill="#9fa4ae" stroke="#6f747d" />
          <path d="M3 4L6.500 7.500L3 11M8 11.500H12" stroke="#222" fill="none" />
        </svg>
        <svg width="6" height="4" aria-hidden="true"><path d="M0 0H6L3 3Z" fill="#555" /></svg>
      </label>
      <input id="command" placeholder="键入命令" className="h-full flex-1 bg-[#b1b1b1] pb-0.5 pl-[7px] text-[13px] italic placeholder:text-[#6d6d6d]" />
      <span className="flex h-full items-center bg-[#b1b1b1] pr-1">
        <svg width="8" height="4" aria-hidden="true"><path d="M0 4H8L4 0Z" fill="#111" /></svg>
      </span>
    </form>
  </div>
);

const Cell: React.FC<{ width: string; children: React.ReactNode }> = ({ width, children }) => (
  <div className={`flex items-center justify-between border-l-2 border-[#808080] px-[3px] ${width}`}>{children}</div>
);

const Person: React.FC<{ color: string; children?: React.ReactNode }> = ({ color, children }) => (
  <Icon>
    <path d="M8 0L10.500 4.500L10 10L16 15.500L10.500 14.500L8 12L5.500 14.500L0 15.500L6 10L5.500 4.500Z" fill={color} />
    {children}
  </Icon>
);

const StatusBar: React.FC = () => (
  <div className="ml-auto flex w-[546px] self-stretch border-t border-[#808080] bg-[#4b4b4b]">
    <Cell width="w-[31px]"><button className="font-semibold whitespace-nowrap">模型</button></Cell>
    <Cell width="w-[65px]">
      <Icon><path d="M2.500 0V16M6 0V16M9.500 0V16M13 0V16M0 2.500H16M0 6H16M0 9.500H16M0 13H16" stroke="#2d95ff" strokeWidth="1.200" /></Icon>
      <Icon><path d="M1.500 1V16M5.500 1V16M9.500 1V16M13.500 1V16" stroke="#c8c8c8" strokeDasharray="1 2" strokeWidth="1.200" /></Icon>
      <Caret big />
    </Cell>
    <Cell width="w-[104px]">
      <Icon><path d="M2.500 1V14.500H16M2.500 8.500H8V14" stroke="#2d95ff" strokeWidth="1.300" /></Icon>
      <Icon><circle cx="7" cy="9" r="6" stroke="#ccc" /><path d="M7 9H16M7 9L13 1" stroke="#ccc" /></Icon>
      <Caret big />
      <Icon><path d="M0 0L16 16" stroke="#ccc" strokeWidth="1.200" /><path d="M8.500 0V16" stroke="#999" /></Icon>
      <Caret big />
    </Cell>
    <Cell width="w-[65px]">
      <Icon><path d="M1 14.500H16M1 14.500L12 3" stroke="#2d95ff" strokeWidth="1.500" /><circle cx="7.500" cy="8.500" r="2" fill="#2d95ff" /></Icon>
      <Icon><rect x="2" y="2" width="13" height="12.500" stroke="#2d95ff" strokeWidth="1.300" /><rect x="0" y="0" width="4" height="4" fill="#12d812" stroke="#111" /></Icon>
      <Caret big />
    </Cell>
    <Cell width="w-[108px]">
      <Person color="#2d95ff"><circle cx="12.500" cy="3.500" r="2.500" stroke="#2d95ff" strokeWidth="1.300" /></Person>
      <Person color="#c8c8c8"><path d="M14 0L11 4H15L12 8" stroke="#ddd" /></Person>
      <Person color="#c8c8c8" />
      <span className="font-medium">1:1</span>
      <Caret big />
    </Cell>
    <Cell width="w-[41px]">
      <Icon><circle cx="8" cy="8" r="4" stroke="#c8c8c8" strokeWidth="3" /><circle cx="8" cy="8" r="6" stroke="#c8c8c8" strokeWidth="1.500" strokeDasharray="2.700 2" /></Icon>
      <Caret big />
    </Cell>
    <Cell width="w-[26px]"><Icon><path d="M8 1V15M1 8H15" stroke="#d0d0d0" strokeWidth="2" /></Icon></Cell>
    <Cell width="w-[27px]"><Icon><path d="M1 14L5 6L9 14Z" stroke="#ccc" /><circle cx="12" cy="8" r="2.500" stroke="#ccc" /></Icon></Cell>
    <Cell width="w-[27px]"><Icon><circle cx="8" cy="8" r="7.500" fill="#1c86f2" /><path d="M7 9L12 4" stroke="#123" strokeWidth="1.500" /></Icon></Cell>
    <Cell width="w-[27px]"><Icon><path d="M.5 3.500H15.500V13.500H.500ZM8 9L12 6M9 6H12V8.500" stroke="#aaa" /></Icon></Cell>
    <Cell width="w-[25px]"><Icon><path d="M0 3H16M0 8H16M0 13H16" stroke="#ccc" strokeWidth="1.500" /></Icon></Cell>
  </div>
);

const layoutTab = "h-[18px] px-[11px] text-[#b0b0b0] bg-linear-to-b from-[#555555] to-[#484848] [clip-path:polygon(0_0,100%_0,calc(100%-6px)_100%,8px_100%)]";

const Footer: React.FC = () => (
  <footer className="flex h-[26px] items-start border-t border-[#5a5a5a] bg-[#383838] pl-[11px]">
    <button className="h-[18px] bg-linear-to-b from-[#5a5a5a] to-[#808080] px-3 font-bold [clip-path:polygon(0_0,100%_0,calc(100%-5px)_100%,7px_100%)]">模型</button>
    <button className={layoutTab}>布局1</button>
    <button className={layoutTab}>布局2</button>
    <button aria-label="新建布局" className="ml-1.5 flex h-4 w-[22px] items-center justify-center rounded-b-lg bg-[#555555]">
      <svg width="8" height="8"><path d="M4 0V8M0 4H8" stroke="#ccc" strokeWidth="2" /></svg>
    </button>
    <StatusBar />
  </footer>
);

const SpeedMeter: React.FC = () => (
  <aside className="absolute bottom-1 right-0.5 flex h-[59px] items-center">
    <div className="-mr-5 flex h-[41px] w-[79px] flex-col justify-around rounded-l-2xl bg-[#1a1d28]/90 pl-2.5 leading-5">
      {[
        { speed: '1.3', color: '#2ca5ea', path: 'M4 8V1M1 4L4 1L7 4' },
        { speed: '5.6', color: '#22b02c', path: 'M4 0V7M1 4L4 7L7 4' },
      ].map(({ speed, color, path }) => (
        <p key={speed} className="flex items-center gap-1.5 whitespace-nowrap">
          <svg width="8" height="8" aria-hidden="true"><path d={path} stroke={color} strokeWidth="1.600" fill="none" /></svg>
          <span>{speed}<span className="text-[11px] text-[#8e929b]">K/s</span></span>
        </p>
      ))}
    </div>
    <div className="relative flex h-[59px] w-[59px] items-center justify-center rounded-full bg-[#2b303e]">
      <svg width="59" height="59" className="absolute inset-0" fill="none" strokeWidth="2" aria-hidden="true">
        <path d="M29.500 4A25.500 25.500 0 0 1 55 29.500" stroke="#3fc6b8" />
        <path d="M55 29.500A25.500 25.500 0 0 1 42 51.500" stroke="#7fd789" />
        <path d="M42 51.500A25.500 25.500 0 0 1 12 48" stroke="#d8dc55" />
        <path d="M12 48A25.500 25.500 0 0 1 4 29.500" stroke="#eda544" />
        <path d="M4 29.500A25.500 25.500 0 0 1 10 13" stroke="#e2584f" />
      </svg>
      <span className="font-['Open_Sans'] text-2xl leading-6 font-light">86</span>
      <span className="pt-2 text-[11px]">%</span>
    </div>
  </aside>
);

const App: React.FC = () => {
  return (
    <div className="relative flex min-h-screen flex-col overflow-hidden bg-[#373737] font-['Noto_Sans','Noto_Sans_CJK_SC',sans-serif] text-xs text-[#f0f0f0]">
      <header>
        <div className="flex items-start border-b border-[#2c2c2c] bg-[#545454]">
          <button aria-label="应用程序菜单" className="flex h-[41px] w-[41px] shrink-0 items-center justify-center gap-0.5 border-2 border-[#111111] bg-linear-to-b from-[#b0b0b0] to-[#5c5c5c]">
            <svg width="25" height="28" viewBox="0 0 25 28" aria-hidden="true">
              <path d="M9 0H14L25 25L18 28L15 20H9L7 26L0 28Z" fill="#cf1f2a" />
              <path d="M12 7L15 16L9 17Z" fill="#8d8d8d" />
              <path d="M14 0L25 25L18 28L12 7Z" fill="#a5121c" />
              <path d="M6 18C12 15 17 16 19 19L9 21Z" fill="#e54a50" />
            </svg>
            <svg width="7" height="5" aria-hidden="true"><path d="M0 0H7L3.500 4Z" fill="#222" /></svg>
          </button>
          <div className="min-w-0 flex-1">
            <TitleBar />
            <nav className="flex h-5 pl-1">
              {tabs.map((tab, index) => (
                <button
                  key={tab}
                  className={
                    index === 0
                      ? 'mt-[3px] -mb-px border border-b-0 border-[#2f2f2f] bg-[#5c5c5c] px-[9px] leading-[17px] text-white'
                      : 'px-2.5 pt-[3px] leading-[17px] text-[#d2d2d2]'
                  }
                >
                  {tab}
                </button>
              ))}
              <button aria-label="显示选项" className="ml-[22px] flex items-center gap-1 pt-0.5">
                <svg width="13" height="8"><rect width="13" height="8" rx="2" fill="#eee" /><path d="M4 5.500H9L6.500 2.500Z" fill="#444" /></svg>
                <Caret />
              </button>
            </nav>
          </div>
        </div>
        <Ribbon />
        <FileTabs />
      </header>
      <main className="flex flex-1">
        <Drawing />
        <div className="w-2 border-r border-[#29b6e8] bg-[#b9cfe9]" />
      </main>
      <Footer />
      <div className="absolute left-[1011px] top-[188px] z-20 h-[43px] w-[238px] rounded border-3 border-[#ff2214]" />
      <svg className="absolute left-[1086px] top-[223px] z-20" width="30" height="345" aria-hidden="true">
        <path d="M9.500 0L19 14L14.500 13L24 343H22.500L5 13L1 15Z" fill="#ff2214" />
      </svg>
      <SpeedMeter />
    </div>
  );
};

export default App;
